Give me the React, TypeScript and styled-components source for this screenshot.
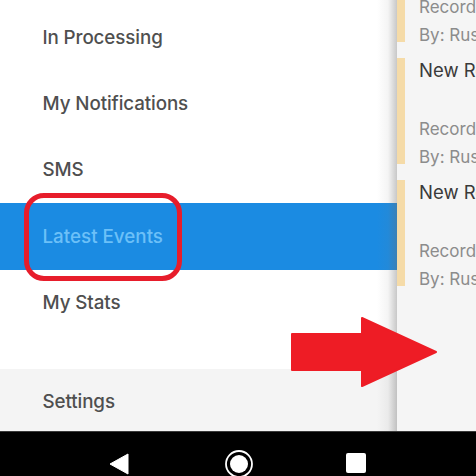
import React from "react";
import styled, { createGlobalStyle } from "styled-components";

const Global = createGlobalStyle`
  html, body { margin: 0; padding: 0; background: #000; }
  body { font-family: Inter, "Liberation Sans", sans-serif; }
`;

const Page = styled.div`
  position: relative;
  width: 476px;
  height: 476px;
  overflow: hidden;
  display: flex;
  flex-direction: column;
`;

const Main = styled.div`
  display: flex;
  height: 432px;
  flex: none;
  border-bottom: 1px solid #3a3a3a;
  box-sizing: border-box;
`;

const Drawer = styled.nav`
  position: relative;
  width: 397px;
  flex: none;
  background: #fff;
  display: flex;
  flex-direction: column;
  padding-top: 4px;
  box-sizing: border-box;
`;

const DrawerShade = styled.div`
  position: absolute;
  top: 0;
  bottom: 0;
  right: 0;
  width: 20px;
  background: linear-gradient(to right, rgba(120,120,120,0), rgba(120,120,120,0.08) 55%, rgba(110,110,110,0.38));
  pointer-events: none;
`;

const MenuItem = styled.div<{ $active?: boolean }>`
  height: 66.4px;
  flex: none;
  display: flex;
  align-items: center;
  padding-left: 42.5px;
  font-size: 18.8px;
  font-weight: 500;
  letter-spacing: ${(p) => (p.$active ? "0" : "-0.1px")};
  color: ${(p) => (p.$active ? "#6cc0f8" : "#4f4f4f")};
  background: ${(p) => (p.$active ? "#1b8be2" : "transparent")};
`;

const Settings = styled(MenuItem)`
  margin-top: auto;
  height: 62px;
  box-sizing: border-box;
  padding-top: 3px;
  background: #f4f4f4;
`;

const Content = styled.section`
  flex: 1;
  min-width: 0;
  background: #f5f5f5;
  overflow: hidden;
`;

const Feed = styled.div`
  margin-top: -64px;
  display: flex;
  flex-direction: column;
  gap: 16px;
`;

const Card = styled.article`
  height: 106px;
  box-sizing: border-box;
  border-left: 8px solid #f5dba8;
  padding-left: 14px;
  white-space: nowrap;
`;

const Title = styled.div`
  font-size: 18.5px;
  line-height: 24px;
  color: #3a3a3a;
`;

const Meta = styled.div`
  font-size: 17px;
  line-height: 28px;
  color: #8c8c8c;
`;

const TitleGap = styled.div`
  height: 33px;
`;

const NavBar = styled.div`
  height: 44px;
  flex: none;
  background: #000;
  position: relative;
`;

const BackIcon = styled.svg`
  position: absolute;
  left: 108px;
  top: 20px;
`;

const HomeIcon = styled.svg`
  position: absolute;
  left: 224px;
  top: 17px;
`;

const RecentIcon = styled.div`
  position: absolute;
  left: 346px;
  top: 21px;
  width: 20px;
  height: 20px;
  border-radius: 2px;
  background: #fff;
`;

const HighlightRing = styled.div`
  position: absolute;
  left: 24px;
  top: 193px;
  width: 158px;
  height: 88px;
  box-sizing: border-box;
  border: 5px solid #e71d2b;
  border-radius: 20px;
  pointer-events: none;
`;

const ArrowMark = styled.svg`
  position: absolute;
  left: 290px;
  top: 316px;
  pointer-events: none;
`;

const menu = ["In Processing", "My Notifications", "SMS", "Latest Events", "My Stats"];

export default function App() {
  return (
    <Page>
      <Global />
      <Main>
        <Drawer>
          {menu.map((m) => (
            <MenuItem key={m} $active={m === "Latest Events"}>{m}</MenuItem>
          ))}
          <Settings>Settings</Settings>
          <DrawerShade />
        </Drawer>
        <Content>
          <Feed>
            {[0, 1, 2].map((i) => (
              <Card key={i}>
                <Title>New Record</Title>
                <TitleGap />
                <Meta>Record</Meta>
                <Meta>By: Russell</Meta>
              </Card>
            ))}
          </Feed>
        </Content>
      </Main>
      <NavBar>
        <BackIcon width="22" height="24" viewBox="0 0 22 24">
          <path d="M20 2 V22 L2 12 Z" fill="#fff" stroke="#fff" strokeWidth="1" strokeLinejoin="round" />
        </BackIcon>
        <HomeIcon width="30" height="30" viewBox="0 0 30 30">
          <circle cx="15" cy="15" r="13" fill="none" stroke="#fff" strokeWidth="1.8" />
          <circle cx="15" cy="15" r="9" fill="#fff" />
        </HomeIcon>
        <RecentIcon />
      </NavBar>
      <HighlightRing />
      <ArrowMark width="150" height="72" viewBox="0 0 150 72">
        <path
          d="M2 18 H72 V2 L146 36 L72 70 V54 H2 Z"
          fill="#ee1c25"
          stroke="#ee1c25"
          strokeWidth="2"
          strokeLinejoin="round"
        />
      </ArrowMark>
    </Page>
  );
}
